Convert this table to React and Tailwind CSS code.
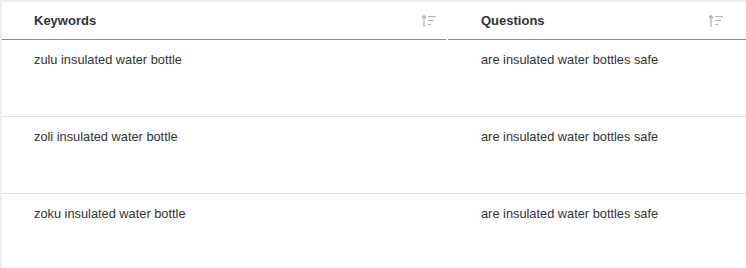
const rows = [
  ['zulu insulated water bottle', 'are insulated water bottles safe'],
  ['zoli insulated water bottle', 'are insulated water bottles safe'],
  ['zoku insulated water bottle', 'are insulated water bottles safe'],
]

function SortIcon() {
  return (
    <svg width="16" height="14" viewBox="0 0 16 14" className="text-[#b5b5b5]">
      <path d="M3 13V1.5M1 4l2-2.5L5 4" fill="none" stroke="currentColor" strokeWidth="1.3" />
      <path d="M7 2.5h8M7 6.5h6M7 10.5h3" stroke="currentColor" strokeWidth="1.2" />
    </svg>
  )
}

export default function App() {
  return (
    <div className="w-[746px] h-[268px] overflow-hidden bg-white border-t-2 border-l-2 border-[#ededed] font-['Liberation_Sans',Arial,sans-serif] text-[13px] text-[#333]">
      <div className="grid grid-cols-[446px_1fr]">
        <div className="h-[38px] flex items-center justify-between pl-8 pr-[9px] border-b border-[#8a8a8a] mr-[2px]">
          <span className="font-bold">Keywords</span>
          <SortIcon />
        </div>
        <div className="h-[38px] flex items-center justify-between pl-[33px] pr-[22px] border-b border-[#8a8a8a]">
          <span className="font-bold">Questions</span>
          <SortIcon />
        </div>
        {rows.map(([k, q], i) => (
          <div key={i} className="contents">
            <div className={`h-[77px] pl-8 pt-[10px] text-[12.8px] ${i < rows.length - 1 ? 'border-b border-[#e3e3e3]' : ''}`}>{k}</div>
            <div className={`h-[77px] pl-[33px] pt-[10px] text-[12.8px] ${i < rows.length - 1 ? 'border-b border-[#e3e3e3]' : ''}`}>{q}</div>
          </div>
        ))}
      </div>
    </div>
  )
}
